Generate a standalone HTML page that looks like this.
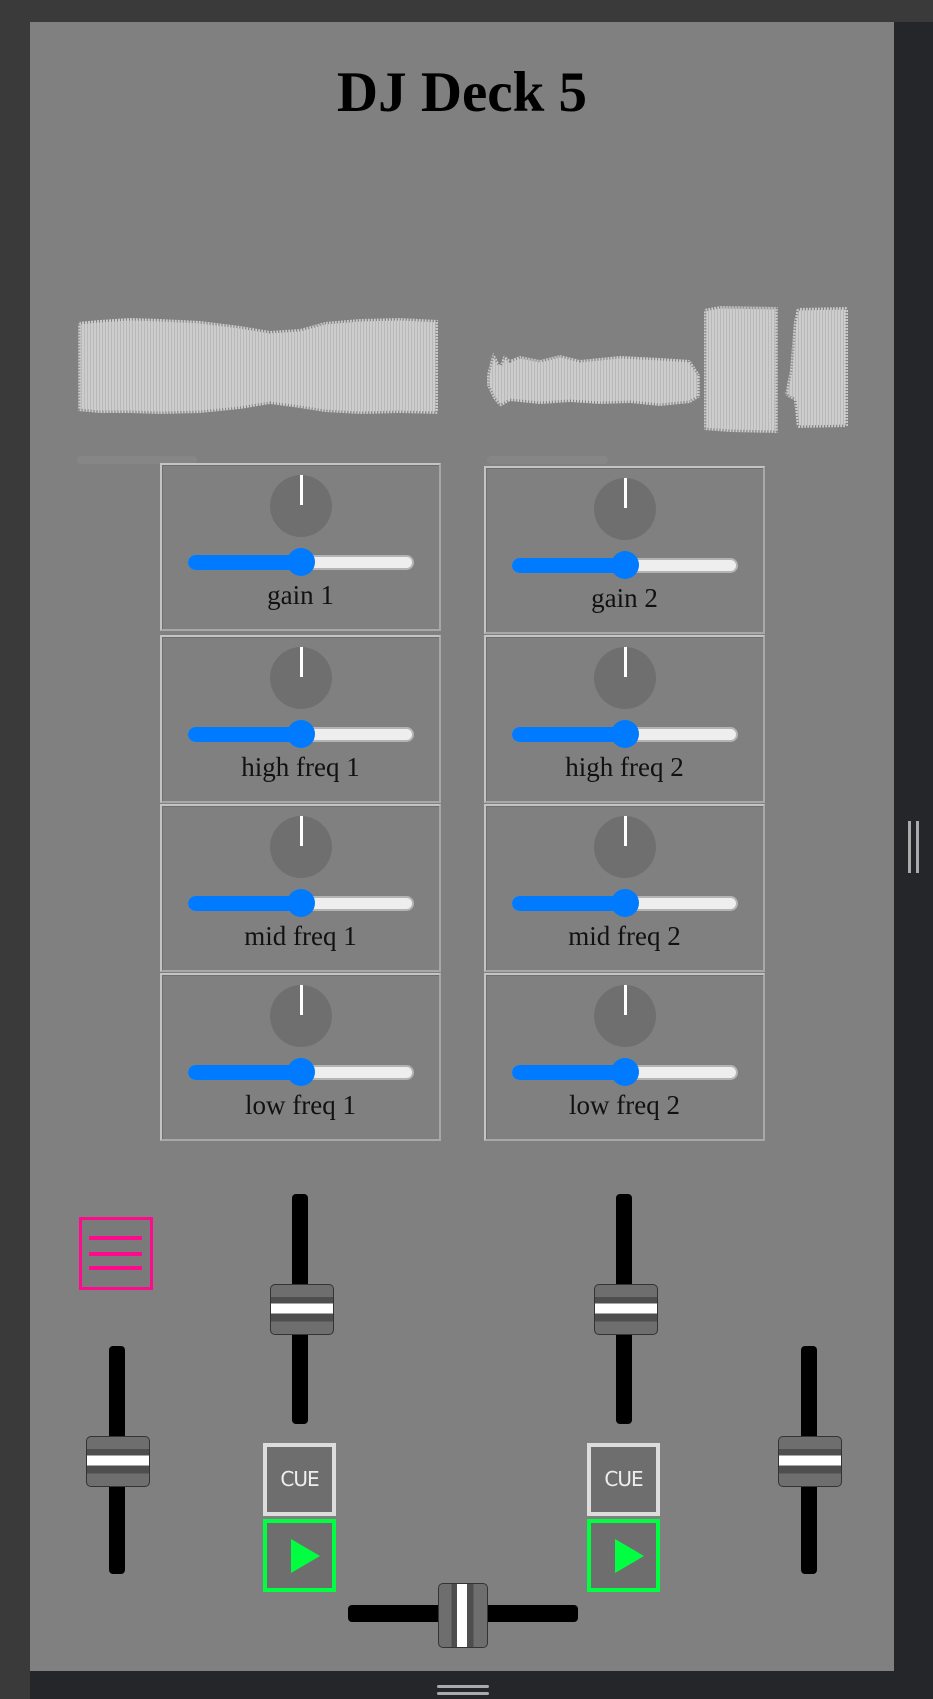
<!DOCTYPE html>
<html><head><style>
*{margin:0;padding:0;box-sizing:border-box}
body{width:933px;height:1699px;background:#3a3a3a;position:relative;overflow:hidden;font-family:"Liberation Serif",serif}
.a{position:absolute}
#panel{left:30px;top:22px;width:864px;height:1649px;background:#808080}
.box{position:absolute;width:281px;height:168px;border:2px solid #c4c4c4;border-right-color:#a8a8a8;border-bottom-color:#a8a8a8;box-shadow:inset 1px 1px 0 #6e6e6e}
.knob{position:absolute;left:108px;top:10px;width:62px;height:62px;border-radius:50%;background:#6f6f6f}
.knob:after{content:"";position:absolute;left:30px;top:0;width:3px;height:30px;background:#fff}
.sl{position:absolute;left:26px;top:90px;width:226px;height:15px;border-radius:8px;background:#eee;border:2px solid #b4b4b4}
.sl i{position:absolute;left:-2px;top:-2px;height:15px;width:115px;background:#007bff;border-radius:8px}
.sl b{position:absolute;left:97px;top:-9px;width:28px;height:28px;border-radius:50%;background:#007bff}
.lb{position:absolute;left:0;width:100%;top:115px;text-align:center;font-size:27px;color:#111}
.vt{position:absolute;width:16px;background:#000;border-radius:4px}
.th{position:absolute;width:64px;height:51px;border-radius:5px;border:1px solid #333;background:linear-gradient(#6e6e6e 0,#6e6e6e 24%,#4e4e4e 24%,#4e4e4e 38%,#fff 38%,#fff 58%,#4e4e4e 58%,#4e4e4e 74%,#6e6e6e 74%)}
.btn{position:absolute;width:73px;height:73px;background:#6e6e6e}
.cue{border:4px solid #ddd;color:#eee;font-family:"DejaVu Sans",sans-serif;font-size:20px;text-align:center;line-height:65px;letter-spacing:-1px}
.play{border:4px solid #00ff40}
.play:after{content:"";position:absolute;left:24px;top:16px;border-left:29px solid #00ff40;border-top:17px solid transparent;border-bottom:17px solid transparent}
</style></head><body>
<div class="a" style="left:894px;top:0;width:39px;height:1699px;background:#25262a"></div>
<div class="a" style="left:894px;top:0;width:39px;height:22px;background:#3a3a3a"></div>
<div class="a" style="left:30px;top:1671px;width:903px;height:28px;background:#25262a"></div>
<div class="a" style="left:437px;top:1685px;width:52px;height:3px;background:#aaa;border-radius:2px"></div>
<div class="a" style="left:437px;top:1692px;width:52px;height:3px;background:#aaa;border-radius:2px"></div>
<div class="a" style="left:908px;top:821px;width:3px;height:52px;background:#aaa"></div>
<div class="a" style="left:916px;top:821px;width:3px;height:52px;background:#aaa"></div>
<div class="a" id="panel"></div>
<div class="a" style="left:30px;top:58px;width:864px;text-align:center;font-size:57px;font-weight:bold;color:#000;line-height:70px">DJ Deck 5</div>
<svg class="a" style="left:0;top:0" width="933" height="480">
<defs><pattern id="st" width="3" height="10" patternUnits="userSpaceOnUse"><rect width="3" height="10" fill="#cdcdcd"/><rect width="1" height="10" fill="#b9b9b9"/></pattern></defs>
<g fill="url(#st)" stroke="#808080" stroke-width="5" stroke-dasharray="1 2">
<polygon points="78,322 100,320 130,318 160,319 200,321 240,326 270,331 300,329 325,322 360,319 400,318 438,320 438,414 400,413 360,414 325,412 300,408 270,404 240,409 200,413 160,414 130,413 100,413 78,411"/>
<polygon points="487,375 493,352 500,365 504,355 510,360 520,356 540,360 560,355 580,360 600,358 620,356 640,357 660,358 690,360 700,375 700,397 690,403 660,406 630,403 600,404 570,402 540,404 510,401 500,407 493,398 487,385"/>
<polygon points="704,309 720,306 778,307 778,433 730,432 704,430"/>
<polygon points="785,395 790,370 794,322 797,308 848,307 848,427 797,428 794,400 790,398"/>
</g>
<rect x="77" y="456" width="120" height="8" rx="4" fill="#868686"/>
<rect x="487" y="456" width="121" height="8" rx="4" fill="#868686"/>
</svg>
<div class="box" style="left:160px;top:463px"><div class="knob"></div><div class="sl"><i></i><b></b></div><div class="lb">gain 1</div></div>
<div class="box" style="left:160px;top:635px"><div class="knob"></div><div class="sl"><i></i><b></b></div><div class="lb">high freq 1</div></div>
<div class="box" style="left:160px;top:804px"><div class="knob"></div><div class="sl"><i></i><b></b></div><div class="lb">mid freq 1</div></div>
<div class="box" style="left:160px;top:973px"><div class="knob"></div><div class="sl"><i></i><b></b></div><div class="lb">low freq 1</div></div>
<div class="box" style="left:484px;top:466px"><div class="knob"></div><div class="sl"><i></i><b></b></div><div class="lb">gain 2</div></div>
<div class="box" style="left:484px;top:635px"><div class="knob"></div><div class="sl"><i></i><b></b></div><div class="lb">high freq 2</div></div>
<div class="box" style="left:484px;top:804px"><div class="knob"></div><div class="sl"><i></i><b></b></div><div class="lb">mid freq 2</div></div>
<div class="box" style="left:484px;top:973px"><div class="knob"></div><div class="sl"><i></i><b></b></div><div class="lb">low freq 2</div></div>
<div class="a" style="left:79px;top:1217px;width:74px;height:73px;border:3px solid #ff0a8c;background:#7a7a7a"></div>
<div class="a" style="left:89px;top:1236px;width:53px;height:4px;background:#ff0a8c"></div>
<div class="a" style="left:89px;top:1252px;width:53px;height:4px;background:#ff0a8c"></div>
<div class="a" style="left:89px;top:1266px;width:53px;height:4px;background:#ff0a8c"></div>
<div class="vt" style="left:292px;top:1194px;height:230px"></div>
<div class="th" style="left:270px;top:1284px"></div>
<div class="vt" style="left:616px;top:1194px;height:230px"></div>
<div class="th" style="left:594px;top:1284px"></div>
<div class="vt" style="left:109px;top:1346px;height:228px"></div>
<div class="th" style="left:86px;top:1436px"></div>
<div class="vt" style="left:801px;top:1346px;height:228px"></div>
<div class="th" style="left:778px;top:1436px"></div>
<div class="btn cue" style="left:263px;top:1443px">CUE</div>
<div class="btn play" style="left:263px;top:1519px"></div>
<div class="btn cue" style="left:587px;top:1443px">CUE</div>
<div class="btn play" style="left:587px;top:1519px"></div>
<div class="a" style="left:348px;top:1605px;width:230px;height:17px;background:#000;border-radius:4px"></div>
<div class="a" style="left:438px;top:1583px;width:50px;height:65px;border-radius:5px;border:1px solid #333;background:linear-gradient(90deg,#6e6e6e 0,#6e6e6e 26%,#4e4e4e 26%,#4e4e4e 38%,#fff 38%,#fff 58%,#4e4e4e 58%,#4e4e4e 72%,#6e6e6e 72%)"></div>
</body></html>
